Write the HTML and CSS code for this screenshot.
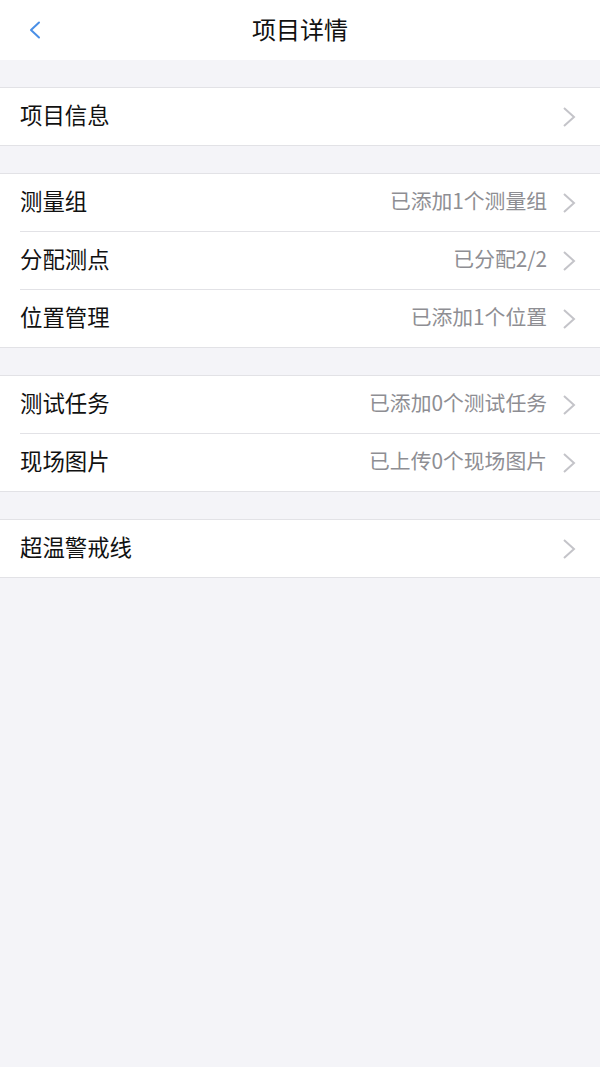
FILE: index.html
```html
<!DOCTYPE html>
<html lang="zh-CN">
<head>
  <meta charset="UTF-8" />
  <meta name="viewport" content="width=device-width, initial-scale=1.0"/>
  <title>项目详情</title>
  <link rel="stylesheet" href="styles.css">
</head>
<body>
  <div class="navbar">
    <span class="back">
      <svg width="12" height="18" viewBox="0 0 12 18"><polyline points="10,1.5 2,9 10,16.5" fill="none" stroke="#4a8fe6" stroke-width="2" stroke-linecap="round" stroke-linejoin="round"/></svg>
    </span>
    <h1>项目详情</h1>
  </div>

  <div class="grupo">
    <div class="linha"><div class="conteudo"><span class="nome">项目信息</span><span class="valor"></span><svg class="seta" width="14" height="22" viewBox="0 0 14 22"><polyline points="2,2 12,11 2,20" fill="none" stroke="#c4c4c9" stroke-width="2"/></svg></div></div>
  </div>

  <div class="grupo">
    <div class="linha"><div class="conteudo"><span class="nome">测量组</span><span class="valor">已添加1个测量组</span><svg class="seta" width="14" height="22" viewBox="0 0 14 22"><polyline points="2,2 12,11 2,20" fill="none" stroke="#c4c4c9" stroke-width="2"/></svg></div></div>
    <div class="linha"><div class="conteudo"><span class="nome">分配测点</span><span class="valor">已分配2/2</span><svg class="seta" width="14" height="22" viewBox="0 0 14 22"><polyline points="2,2 12,11 2,20" fill="none" stroke="#c4c4c9" stroke-width="2"/></svg></div></div>
    <div class="linha"><div class="conteudo"><span class="nome">位置管理</span><span class="valor">已添加1个位置</span><svg class="seta" width="14" height="22" viewBox="0 0 14 22"><polyline points="2,2 12,11 2,20" fill="none" stroke="#c4c4c9" stroke-width="2"/></svg></div></div>
  </div>

  <div class="grupo">
    <div class="linha"><div class="conteudo"><span class="nome">测试任务</span><span class="valor">已添加0个测试任务</span><svg class="seta" width="14" height="22" viewBox="0 0 14 22"><polyline points="2,2 12,11 2,20" fill="none" stroke="#c4c4c9" stroke-width="2"/></svg></div></div>
    <div class="linha"><div class="conteudo"><span class="nome">现场图片</span><span class="valor">已上传0个现场图片</span><svg class="seta" width="14" height="22" viewBox="0 0 14 22"><polyline points="2,2 12,11 2,20" fill="none" stroke="#c4c4c9" stroke-width="2"/></svg></div></div>
  </div>

  <div class="grupo">
    <div class="linha"><div class="conteudo"><span class="nome">超温警戒线</span><span class="valor"></span><svg class="seta" width="14" height="22" viewBox="0 0 14 22"><polyline points="2,2 12,11 2,20" fill="none" stroke="#c4c4c9" stroke-width="2"/></svg></div></div>
  </div>
</body>
</html>
```

FILE: styles.css
```css
body {
  margin: 0;
  min-height: 1067px;
  background-color: #f4f4f8;
  font-family: "Noto Sans CJK SC", "Noto Sans", sans-serif;
  color: #111;
}
.navbar {
  height: 60px;
  background-color: #fff;
  display: flex;
  align-items: center;
  justify-content: center;
  position: relative;
}
.navbar h1 {
  margin: 0 0 4px;
  font-size: 24px;
  font-weight: 400;
}
.back {
  position: absolute;
  left: 29px;
  top: 21px;
  display: flex;
}
.grupo {
  margin-top: 27px;
  background-color: #fff;
  border-top: 1px solid #e2e2e6;
  border-bottom: 1px solid #e2e2e6;
}
.linha {
  padding-left: 20px;
}
.conteudo {
  height: 57px;
  display: flex;
  align-items: center;
  padding-right: 24px;
  border-bottom: 1px solid #e2e2e6;
}
.linha:last-child .conteudo {
  border-bottom: none;
}
.nome {
  font-size: 22.4px;
  flex: 1;
  margin-bottom: 5px;
}
.valor {
  font-size: 20.8px;
  color: #8e8e93;
  margin-right: 15px;
  margin-bottom: 5px;
}
.seta {
  display: block;
}
```
